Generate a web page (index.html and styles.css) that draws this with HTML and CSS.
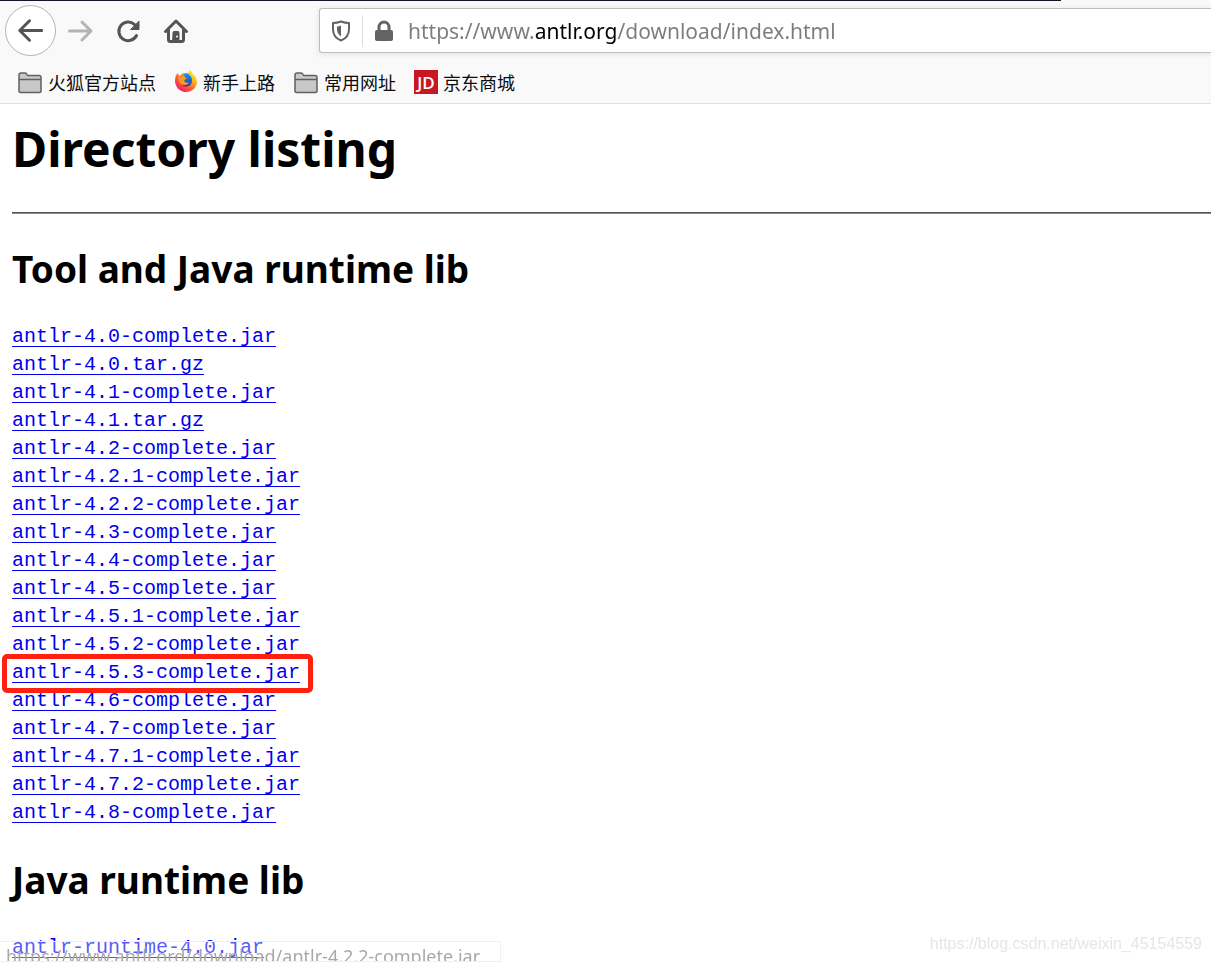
FILE: index.html
```
<!DOCTYPE html>
<html lang="zh-CN">
<head>
<meta charset="utf-8">
<title>Directory listing</title>
<link rel="stylesheet" href="styles.css">
</head>
<body>
<header class="chrome">
  <div class="tab-edge"></div>
  <nav class="toolbar" aria-label="Navigation">
    <button class="tool back" aria-label="Back"><svg width="50" height="50" viewBox="0 0 50 50"><path d="M36.500 25H14.500M24 15L14 25L24 35"/></svg></button>
    <button class="tool forward" aria-label="Forward" disabled><svg width="28" height="28" viewBox="0 0 28 28"><path d="M3.500 14H25M16 5L25 14L16 23"/></svg></button>
    <button class="tool" aria-label="Reload"><svg width="28" height="28" viewBox="0 0 28 28"><path d="M22.500 18.500A9.300 9.300 0 1 1 20.500 7.500L23 10"/><path class="solid" d="M25 4.500V12.500H17Z"/></svg></button>
    <button class="tool" aria-label="Home"><svg width="28" height="28" viewBox="0 0 28 28"><path d="M3.500 14.500L14 4L24.500 14.500M6.500 13V22.500Q6.500 24.500 8.500 24.500H19.500Q21.500 24.500 21.500 22.500V13"/><path class="solid" d="M11 15.500Q11 14.500 12 14.500H16Q17 14.500 17 15.500V24H11Z"/><circle class="knob" cx="15" cy="19.500" r="1"/></svg></button>
    <div class="address">
      <button class="badge shield" aria-label="Tracking protection"><svg width="20" height="22" viewBox="0 0 20 22"><path d="M10 1.500Q14 3 18 3V9Q18 17.500 10 20.500Q2 17.500 2 9V3Q6 3 10 1.500Z"/><path class="solid" d="M10 5.500V16.500Q6 14 6 9V6.500Q8 6.500 10 5.500Z"/></svg></button>
      <button class="badge lock" aria-label="Connection secure"><svg width="20" height="22" viewBox="0 0 20 22"><path d="M5 11V7A5 5 0 0 1 15 7V11"/><path class="solid" d="M3 10H17Q19 10 19 12V19Q19 21 17 21H3Q1 21 1 19V12Q1 10 3 10Z"/></svg></button>
      <input class="url" type="text" aria-label="Address" value="https://www.antlr.org/download/index.html">
    </div>
  </nav>
  <nav class="bookmarks" aria-label="Bookmarks">
    <a class="bookmark" href="#"><svg width="26" height="24" viewBox="0 0 26 24"><path class="folder" d="M2 21V5Q2 3 4 3H8Q9.500 3 10 4.500L10.500 5.500H22Q24 5.500 24 7.500V21Q24 22.500 22 22.500H4Q2 22.500 2 21ZM2 9.500H24"/></svg>火狐官方站点</a>
    <a class="bookmark" href="#"><svg width="24" height="24" viewBox="0 0 24 24"><defs><linearGradient id="fox" x1=".85" y1=".05" x2=".2" y2=".95"><stop offset="0" stop-color="#fff044"/><stop offset=".35" stop-color="#ffb01f"/><stop offset=".65" stop-color="#ff5a2c"/><stop offset="1" stop-color="#f21777"/></linearGradient><linearGradient id="globe" x1="0" y1="0" x2="0" y2="1"><stop offset="0" stop-color="#0a9cff"/><stop offset="1" stop-color="#2437ad"/></linearGradient></defs><path fill="url(#fox)" d="M3.500 3L5.500 6L9 3Q14 4 15.500 1L16 0Q18 1.500 19 4Q23 7 23 13A11 11 0 1 1 1.200 9Q1.500 5 3.500 3Z"/><path fill="url(#globe)" d="M8 6Q9 2.500 13 3.500Q17.500 5 18 10Q18 16 12 16.500Q7 16 6.500 11Z"/><path fill="#ff9820" d="M4 7L8 7Q9 5 10 4Q10 6 11 7L13 8.500L10.500 10V12Q13 13 15 12.500Q14 15 10.500 15Q6 15 5 11Z"/></svg>新手上路</a>
    <a class="bookmark" href="#"><svg width="26" height="24" viewBox="0 0 26 24"><path class="folder" d="M2 21V5Q2 3 4 3H8Q9.500 3 10 4.500L10.500 5.500H22Q24 5.500 24 7.500V21Q24 22.500 22 22.500H4Q2 22.500 2 21ZM2 9.500H24"/></svg>常用网址</a>
    <a class="bookmark" href="#"><span class="jd" aria-hidden="true">JD</span>京东商城</a>
  </nav>
</header>
<main class="page">
  <h1 class="title">Directory listing</h1>
  <hr class="rule">
  <h2 class="section">Tool and Java runtime lib</h2>
  <ul class="files">
    <li><a href="#">antlr-4.0-complete.jar</a></li>
    <li><a href="#">antlr-4.0.tar.gz</a></li>
    <li><a href="#">antlr-4.1-complete.jar</a></li>
    <li><a href="#">antlr-4.1.tar.gz</a></li>
    <li><a href="#">antlr-4.2-complete.jar</a></li>
    <li><a href="#">antlr-4.2.1-complete.jar</a></li>
    <li><a href="#">antlr-4.2.2-complete.jar</a></li>
    <li><a href="#">antlr-4.3-complete.jar</a></li>
    <li><a href="#">antlr-4.4-complete.jar</a></li>
    <li><a href="#">antlr-4.5-complete.jar</a></li>
    <li><a href="#">antlr-4.5.1-complete.jar</a></li>
    <li><a href="#">antlr-4.5.2-complete.jar</a></li>
    <li class="marked"><a href="#">antlr-4.5.3-complete.jar</a></li>
    <li><a href="#">antlr-4.6-complete.jar</a></li>
    <li><a href="#">antlr-4.7-complete.jar</a></li>
    <li><a href="#">antlr-4.7.1-complete.jar</a></li>
    <li><a href="#">antlr-4.7.2-complete.jar</a></li>
    <li><a href="#">antlr-4.8-complete.jar</a></li>
  </ul>
  <h2 class="section">Java runtime lib</h2>
  <ul class="files">
    <li><a href="#">antlr-runtime-4.0.jar</a></li>
  </ul>
</main>
<div class="status">https://www.antlr.ord/download/antlr-4.2.2-complete.jar</div>
<div class="watermark">https://blog.csdn.net/weixin_45154559</div>
</body>
</html>
```
FILE: styles.css
```
* { box-sizing: border-box; }
body {
  margin: 0;
  overflow: hidden;
  background: #fff;
  color: #000;
  font-family: "Noto Sans", "Noto Sans CJK SC", sans-serif;
}
button { padding: 0; border: 0; background: none; }
svg { display: block; flex: none; fill: none; stroke-linecap: round; stroke-linejoin: round; }

.chrome { background: #f9f9fa; border-bottom: 1px solid #e0e0e1; }
.tab-edge { height: 1px; margin-right: 150px; background: #15142b; }
.toolbar { display: flex; align-items: center; gap: 20px; height: 59px; padding-left: 5px; }
.tool svg { stroke: #545455; stroke-width: 3; }
.tool .solid { fill: #545455; stroke-width: 1; }
.tool .knob { fill: #f9f9fa; stroke: none; }
.back { border: 1px solid #b4b4b5; border-radius: 50%; background: #fff; margin-right: -10px; }
.back svg { width: 49px; height: 49px; }
.forward svg { stroke: #b4b4b5; }
.address {
  display: flex;
  align-items: center;
  flex: 1;
  height: 45px;
  margin-left: 109px;
  border: 1px solid #bdbdbe;
  border-right: 0;
  border-radius: 3px 0 0 3px;
  background: #fff;
  box-shadow: 0 1px 6px rgba(0, 0, 0, .1);
}
.badge { display: flex; align-items: center; justify-content: center; height: 32px; }
.badge svg { stroke: #636363; stroke-width: 3; }
.badge .solid { fill: #636363; stroke: none; }
.shield { width: 43px; border-right: 1px solid #dedede; }
.shield svg { stroke-width: 2; }
.lock { width: 42px; }
.url {
  flex: 1;
  min-width: 0;
  height: 40px;
  padding: 0 0 0 3px;
  border: 0;
  outline: 0;
  font: 21px/32px "Noto Sans", sans-serif;
  color: transparent;
  background: linear-gradient(90deg, #7c7c7c 129px, #000 129px, #000 213px, #7c7c7c 213px);
  -webkit-background-clip: text;
  background-clip: text;
}
.bookmarks { display: flex; align-items: center; gap: 18px; height: 43px; padding-left: 17px; }
.bookmark {
  display: flex;
  align-items: center;
  gap: 5px;
  color: #0c0c0d;
  font: 18px/22px "Noto Sans CJK SC", sans-serif;
  text-decoration: none;
}
.folder { fill: #c8c8ca; stroke: #606062; stroke-width: 1.5; }
.jd {
  width: 24px;
  height: 24px;
  background: #c81623;
  color: #fff;
  font: 600 17px/25px "Open Sans", sans-serif;
  text-align: center;
}

.page { padding-left: 12px; }
.title { margin: 0; padding-top: 12px; font-size: 48px; line-height: 66px; }
.rule { height: 2px; margin: 30px 0 31px; border: 0; border-top: 1px solid #555; background: #888; }
.section { margin: 0; font-size: 37px; line-height: 48px; }
.files {
  margin: 30px 0 29px;
  padding: 0;
  list-style: none;
  font: 20px/28px "Liberation Mono", monospace;
}
.files li { width: fit-content; }
.files a { color: #0000ee; text-decoration-thickness: 1px; text-underline-offset: 4px; }
.marked { position: relative; }
.marked::after {
  content: "";
  position: absolute;
  inset: -5px -13px -6px -10px;
  border: 5px solid #ff2010;
  border-radius: 5px;
}
.status {
  position: fixed;
  left: 0;
  bottom: 0;
  height: 21px;
  padding: 0 20px 0 6px;
  overflow: hidden;
  border: 1px solid #f0f0f0;
  border-left: 0;
  background: rgba(255, 255, 255, .35);
  color: #a8a8a8;
  font-size: 18px;
  line-height: 28px;
  white-space: nowrap;
}
.watermark {
  position: fixed;
  right: 9px;
  bottom: 8px;
  color: #e6e6e6;
  font: 16px/20px "Liberation Sans", sans-serif;
}
```
